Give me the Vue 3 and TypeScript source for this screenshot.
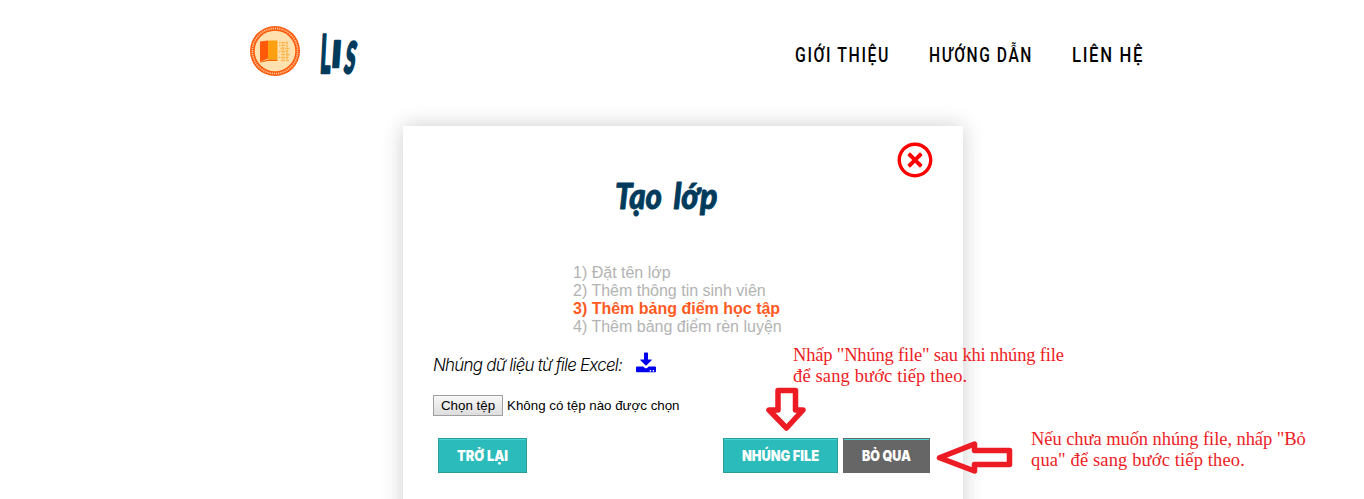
<script setup lang="ts">
interface Lettering {
  text: string
  width: number
}

const links: Lettering[] = [
  { text: 'GIỚI THIỆU', width: 95 },
  { text: 'HƯỚNG DẪN', width: 104 },
  { text: 'LIÊN HỆ', width: 72 },
]

const steps: string[] = [
  'Đặt tên lớp',
  'Thêm thông tin sinh viên',
  'Thêm bảng điểm học tập',
  'Thêm bảng điểm rèn luyện',
]
const currentStep = 3
</script>

<template>
  <div class="page">
    <header class="header">
      <div class="brand">
        <svg class="seal" viewBox="0 0 50 50" width="50" height="50">
          <circle cx="25" cy="25" r="25" fill="#ff5a0a" />
          <circle cx="25" cy="25" r="22.6" fill="none" stroke="#ffe5c8" stroke-width="1.8" stroke-dasharray="1.3 .9" opacity=".75" />
          <circle cx="25" cy="25" r="20.3" fill="#ffe1b0" />
          <path d="M10 15.5 18 14.5V32.5L10 36Z" fill="#ff5a0a" />
          <path d="M18 14.5H27.5V33.5H18Z" fill="#ffa010" />
          <path d="M10 36 18 33.5H27.5V35H18L11 36.5Z" fill="#f26a00" />
          <g fill="none" stroke="#fbb548" stroke-width="1.6" stroke-dasharray="1.6 .8">
            <path d="M29 16.5H38M29 19.5H36M30 22.5H40M29 25.5H39M31 28.5H40M29 31.5H39M31 34.5H39" />
            <path d="M33 16V34M37 17V35" />
          </g>
        </svg>
        <svg class="wordmark" viewBox="0 0 44 50" width="44" height="50">
          <g class="brush">
            <text transform="translate(2.5 46.5) skewX(-3) scale(.38 1)" font-size="53">L</text>
            <text transform="translate(13.8 40.5) skewX(-4) scale(.9 1)" font-size="36">I</text>
            <text transform="translate(26 46.5) skewX(-9) scale(.44 1)" font-size="43">S</text>
          </g>
        </svg>
      </div>
      <nav class="nav">
        <a v-for="link in links" :key="link.text" class="nav-link">
          <svg :width="link.width" height="34">
            <text x="0" y="24.5" :textLength="link.width" lengthAdjust="spacingAndGlyphs">{{ link.text }}</text>
          </svg>
        </a>
      </nav>
    </header>

    <main class="card">
      <svg class="close" viewBox="0 0 512 512" width="36" height="36" fill="#f00">
        <path d="M256 8C119 8 8 119 8 256s111 248 248 248 248-111 248-248S393 8 256 8zm0 448c-110.5 0-200-89.5-200-200S145.5 56 256 56s200 89.5 200 200-89.5 200-200 200zm101.800-262.200L295.600 256l62.200 62.200c4.700 4.700 4.700 12.300 0 17l-22.600 22.600c-4.700 4.700-12.300 4.700-17 0L256 295.600l-62.200 62.200c-4.700 4.700-12.300 4.700-17 0l-22.600-22.600c-4.700-4.700-4.700-12.300 0-17l62.200-62.200-62.200-62.200c-4.700-4.700-4.700-12.300 0-17l22.600-22.600c4.700-4.700 12.300-4.700 17 0l62.200 62.200 62.200-62.200c4.700-4.700 12.300-4.700 17 0l22.600 22.600c4.700 4.700 4.700 12.300 0 17z" />
      </svg>
      <h1 class="title">
        <svg width="110" height="50">
          <text x="3" y="33" textLength="47" lengthAdjust="spacingAndGlyphs">Tạo</text>
          <text x="61.5" y="33" textLength="44" lengthAdjust="spacingAndGlyphs">lớp</text>
        </svg>
      </h1>
      <div class="steps">
        <div v-for="(step, i) in steps" :key="step" class="step" :class="{ current: i + 1 === currentStep }">
          {{ i + 1 }}) {{ step }}
        </div>
      </div>
      <div class="source">
        <svg class="source-label" width="190" height="26">
          <text x="0" y="19" textLength="189" lengthAdjust="spacingAndGlyphs">Nhúng dữ liệu từ file Excel:</text>
        </svg>
        <svg class="download" viewBox="0 0 20 21" width="20" height="21">
          <path d="M8 1.2Q8 .5 8.7.5H11.3Q12 .5 12 1.2V7.5H15.3Q16.3 7.5 15.6 8.3L10.6 13.2Q10 13.8 9.4 13.2L4.4 8.3Q3.7 7.5 4.7 7.5H8ZM1 14.500H7.200L8.600 15.700Q10 16.700 11.400 15.700L12.800 14.500H19Q20 14.500 20 15.500V19.300Q20 20.300 19 20.300H1Q0 20.300 0 19.300V15.500Q0 14.500 1 14.500ZM13.700 18V19.400H15.100V18ZM16.700 18V19.400H18.100V18Z" fill="#0000ee" fill-rule="evenodd" />
        </svg>
      </div>
      <div class="picker">
        <button class="choose" type="button">Chọn tệp</button>
        <span class="picked">Không có tệp nào được chọn</span>
      </div>
      <div class="actions">
        <button class="btn back" type="button">
          <svg width="52" height="24"><text y="16" textLength="51" lengthAdjust="spacingAndGlyphs">TRỞ LẠI</text></svg>
        </button>
        <button class="btn embed" type="button">
          <svg width="78" height="24"><text y="16" textLength="77" lengthAdjust="spacingAndGlyphs">NHÚNG FILE</text></svg>
        </button>
        <button class="btn skip" type="button">
          <svg width="50" height="24"><text y="16" textLength="49" lengthAdjust="spacingAndGlyphs">BỎ QUA</text></svg>
        </button>
      </div>
    </main>

    <p class="note note-embed">
      <span class="line tight">Nhấp "Nhúng file" sau khi nhúng file</span>
      <span class="line loose">để sang bước tiếp theo.</span>
    </p>
    <p class="note note-skip">
      <span class="line snug">Nếu chưa muốn nhúng file, nhấp "Bỏ</span>
      <span class="line loose">qua" để sang bước tiếp theo.</span>
    </p>
    <svg class="pointer pointer-down" width="42" height="46" viewBox="0 0 42 46">
      <path d="M13 5.5H30.5V25H38L21.5 43 4 25H13Z" />
    </svg>
    <svg class="pointer pointer-left" width="78" height="36" viewBox="0 0 78 36">
      <path d="M74.5 10.5V24.5H39.5V31L4.5 17.7 39.5 4V10.5Z" />
    </svg>
  </div>
</template>

<style>
body {
  margin: 0;
  background: #fff;
}
</style>

<style scoped>
.page {
  position: relative;
  height: 499px;
  overflow: hidden;
  font-family: "Liberation Sans", Arial, sans-serif;
}

.header {
  display: flex;
  justify-content: space-between;
  box-sizing: border-box;
  height: 126px;
  padding: 26px 220px 0 250px;
}

.brand {
  display: flex;
  gap: 17px;
}

.brush {
  fill: #003b5c;
  stroke: #003b5c;
  stroke-width: 2.5px;
  stroke-linejoin: round;
  font-family: Lato, sans-serif;
  font-weight: 900;
}

.nav {
  display: flex;
  gap: 39px;
  padding-top: 11px;
}

.nav-link {
  height: 34px;
  font-family: Roboto, sans-serif;
  font-size: 20px;
  font-weight: 500;
  letter-spacing: 2px;
}

svg {
  display: block;
  overflow: visible;
}

.card {
  display: flex;
  flex-direction: column;
  box-sizing: border-box;
  width: 560px;
  height: 420px;
  margin: 0 auto 0 403px;
  padding: 16px 30px 0;
  background: #fff;
  box-shadow: 0 0 20px rgba(0, 0, 0, 0.2);
}

.close {
  align-self: flex-end;
}

.title {
  height: 50px;
  margin: -2px 0 0 179px;
  font-family: Lato, sans-serif;
  font-size: 36px;
  font-style: italic;
  font-weight: 900;
}

.title text {
  fill: #003b5c;
  stroke: #003b5c;
  stroke-width: 0.9px;
  stroke-linejoin: round;
}

.steps {
  margin: 38px 0 0 140px;
  color: #b3b3b3;
  font-size: 16px;
  line-height: 18px;
}

.step {
  white-space: nowrap;
}

.current {
  color: #ff5a1f;
  font-weight: 700;
}

.source {
  display: flex;
  gap: 13px;
  height: 26px;
  margin-top: 16px;
  font-family: Inter, sans-serif;
  font-size: 17.5px;
  font-style: italic;
  font-weight: 300;
  letter-spacing: -0.8px;
}

.picker {
  display: flex;
  align-items: center;
  gap: 4px;
  height: 21px;
  margin-top: 17px;
  font-size: 13.333px;
}

.choose {
  box-sizing: border-box;
  width: 70px;
  height: 21px;
  padding: 0;
  border: 1px solid #a0a0a0;
  background: linear-gradient(#f8f8f8, #dddddd);
  font: inherit;
  white-space: nowrap;
}

.picked {
  white-space: nowrap;
}

.actions {
  display: flex;
  gap: 5px;
  margin: 22px 3px 0 5px;
}

.btn {
  box-sizing: border-box;
  height: 35px;
  padding: 2px 0 0 18px;
  border: 1px solid #2a9c9c;
  background: #2cbbbb;
  box-shadow: inset 0 1px 0 #45d6d6;
  font-family: Inter, sans-serif;
  font-size: 14px;
  font-weight: 900;
}

.btn text {
  fill: #fff;
}

.back {
  width: 89px;
  margin-right: auto;
}

.embed {
  width: 115px;
}

.skip {
  width: 87px;
  border-color: #666;
  background: #666;
}

.note {
  position: absolute;
  margin: 0;
  color: #ed1c24;
  font-family: "Liberation Serif", "Times New Roman", serif;
  font-size: 18.5px;
  line-height: 21px;
  white-space: nowrap;
}

.line {
  display: block;
}

.tight {
  letter-spacing: -0.18px;
}

.snug {
  letter-spacing: -0.07px;
}

.loose {
  letter-spacing: 0.13px;
}

.note-embed {
  left: 793px;
  top: 345px;
}

.note-skip {
  left: 1031px;
  top: 429px;
}

.pointer {
  position: absolute;
  fill: none;
  stroke: #ed1c24;
  stroke-width: 5.5;
  stroke-linejoin: round;
}

.pointer-down {
  left: 765px;
  top: 385px;
}

.pointer-left {
  left: 935px;
  top: 440px;
}
</style>
